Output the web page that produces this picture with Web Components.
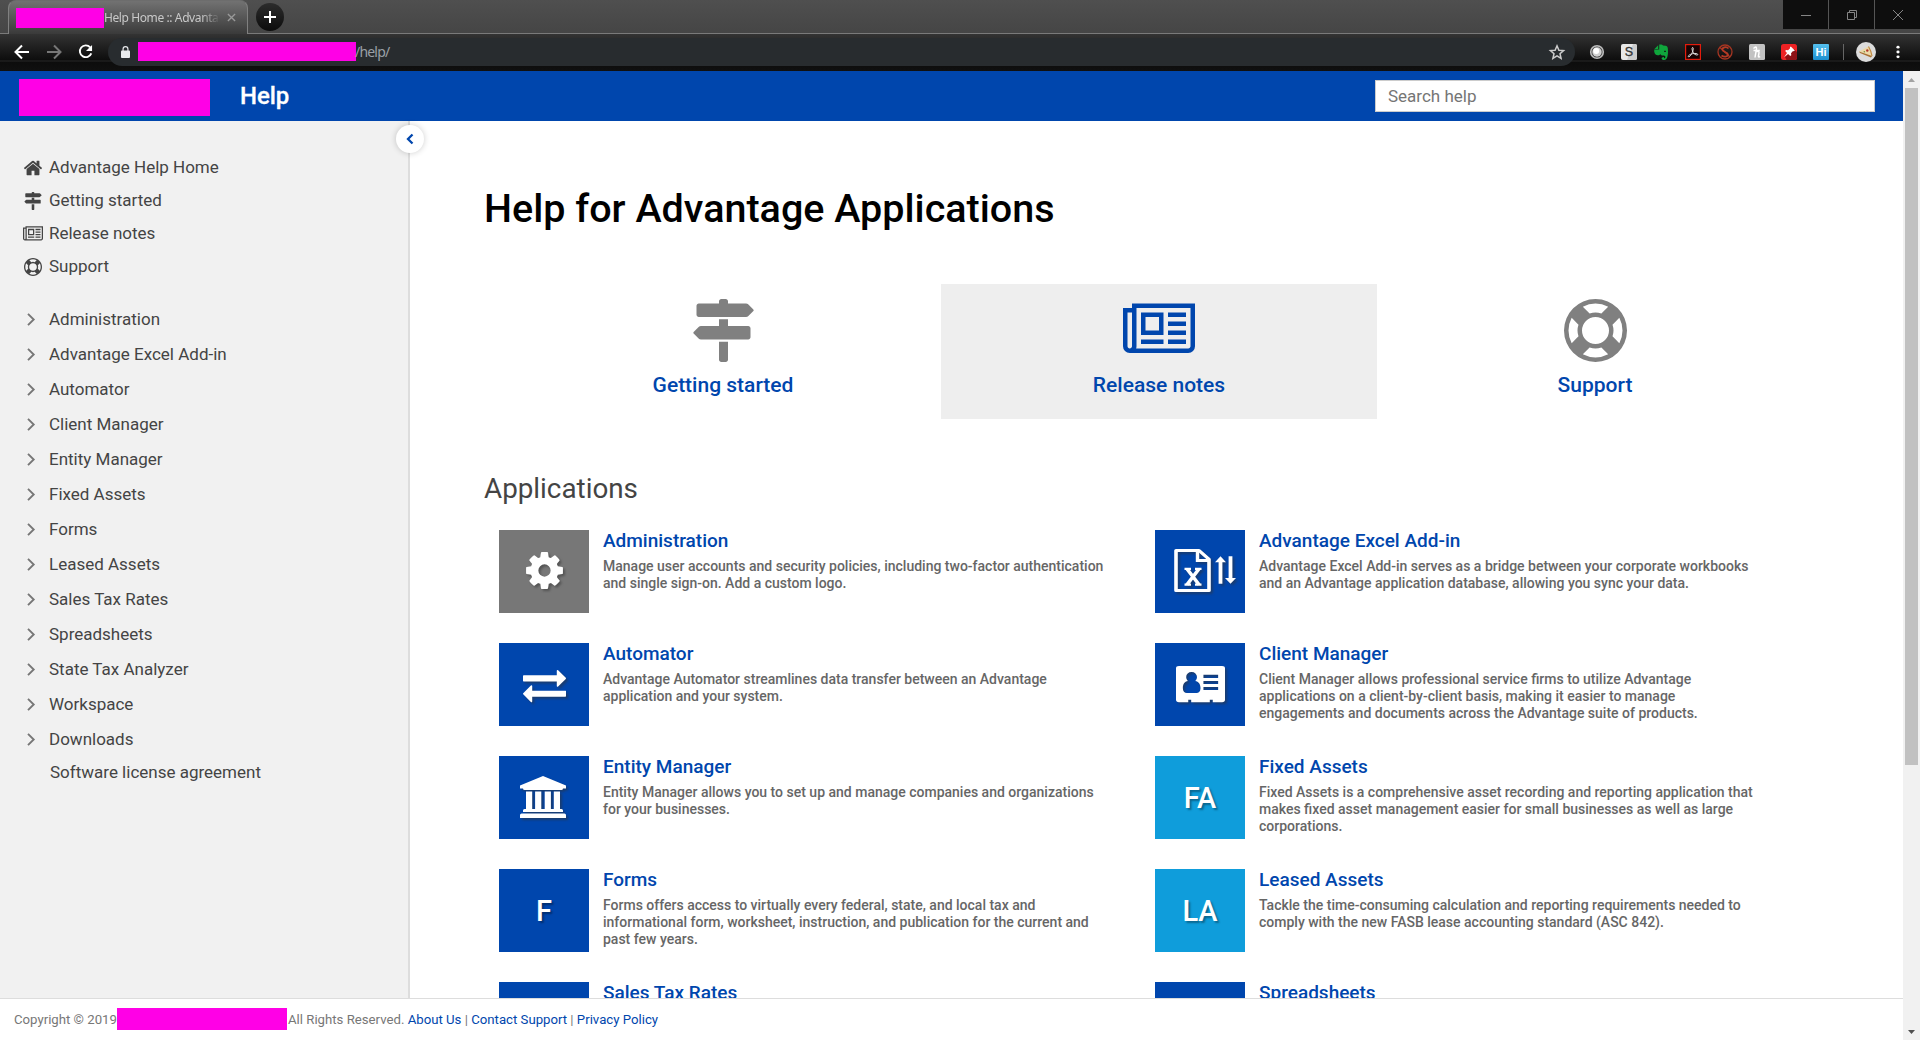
<!DOCTYPE html>
<html lang="en">
<head>
<meta charset="utf-8">
<title>Help Home :: Advantage</title>
<style>
html,body{margin:0;height:100%;overflow:hidden;background:#fff}
body{font:17px/1.2 Roboto,"Liberation Sans",sans-serif;color:#444}
</style>
</head>
<body>
<help-window></help-window>
<script>
const P={
home:['0 0 1792 1792','<path d="M1472 992v480q0 26-19 45t-45 19h-384v-384h-256v384h-384q-26 0-45-19t-19-45v-480q0-1 .5-3t.5-3l575-474 575 474q1 2 1 6zm223-69l-62 74q-8 9-21 11h-3q-13 0-21-7l-692-577-692 577q-12 8-24 7-13-2-21-11l-62-74q-8-10-7-23.5t11-21.5l719-599q32-26 76-26t76 26l244 204v-195q0-14 9-23t23-9h192q14 0 23 9t9 23v408l219 182q10 8 11 21.5t-7 23.5z"/>'],
signs:['0 0 1792 1792','<path d="M1745 297q10 10 10 23t-10 23l-141 141q-28 28-68 28h-1344q-26 0-45-19t-19-45v-256q0-26 19-45t45-19h576v-64q0-26 19-45t45-19h128q26 0 45 19t19 45v64h512q40 0 68 28zm-977 919h256v512q0 26-19 45t-45 19h-128q-26 0-45-19t-19-45v-512zm832-448q26 0 45 19t19 45v256q0 26-19 45t-45 19h-1344q-40 0-68-28l-141-141q-10-10-10-23t10-23l141-141q28-28 68-28h512v-192h256v192h576z"/>'],
news:['0 0 2048 1792','<path d="M1024 512h-384v384h384v-384zm128 640v128h-640v-128h640zm0-768v640h-640v-640h640zm640 768v128h-512v-128h512zm0-256v128h-512v-128h512zm0-256v128h-512v-128h512zm0-256v128h-512v-128h512zm-1536 960v-960h-128v960q0 26 19 45t45 19 45-19 19-45zm1664 0v-1088h-1536v1088q0 33-11 64h1483q26 0 45-19t19-45zm128-1216v1216q0 80-56 136t-136 56h-1664q-80 0-136-56t-56-136v-1088h256v-128h1792z"/>'],
ring:['0 0 1792 1792','<path d="M896 0q182 0 348 71t286 191 191 286 71 348-71 348-191 286-286 191-348 71-348-71-286-191-191-286-71-348 71-348 191-286 286-191 348-71zm0 128q-190 0-361 90l194 194q82-28 167-28t167 28l194-194q-171-90-361-90zm-678 1129l194-194q-28-82-28-167t28-167l-194-194q-90 171-90 361t90 361zm678 407q190 0 361-90l-194-194q-82 28-167 28t-167-28l-194 194q171 90 361 90zm0-384q159 0 271.5-112.5t112.5-271.5-112.5-271.5-271.5-112.5-271.5 112.5-112.5 271.5 112.5 271.5 271.5 112.5zm484-217l194 194q90-171 90-361t-90-361l-194 194q28 82 28 167t-28 167z"/>'],
cog:['0 0 1792 1792','<path d="M1152 896q0-106-75-181t-181-75-181 75-75 181 75 181 181 75 181-75 75-181zm512-109v222q0 12-8 23t-20 13l-185 28q-19 54-39 91 35 50 107 138 10 12 10 25t-9 23q-27 37-99 108t-94 71q-12 0-26-9l-138-108q-44 23-91 38-16 136-29 186-7 28-36 28h-222q-14 0-24.5-8.5t-11.5-21.5l-28-184q-49-16-90-37l-141 107q-10 9-25 9-14 0-25-11-126-114-165-168-7-10-7-23 0-12 8-23 15-21 51-66.5t54-70.5q-27-50-41-99l-183-27q-13-2-21-12.5t-8-23.5v-222q0-12 8-23t19-13l186-28q14-46 39-92-40-57-107-138-10-12-10-24 0-10 9-23 26-36 98.500-107.500t94.500-71.500q13 0 26 10l138 107q44-23 91-38 16-136 29-186 7-28 36-28h222q14 0 24.500 8.500t11.500 21.500l28 184q49 16 90 37l142-107q9-9 24-9 13 0 25 10 129 119 165 170 7 8 7 22 0 12-8 23-15 21-51 66.500t-54 70.500q26 50 41 98l183 28q13 2 21 12.500t8 23.500z"/>'],
exchange:['0 0 1792 1792','<path d="M1792 1184v192q0 13-9.500 22.500t-22.500 9.500h-1376v192q0 13-9.500 22.500t-22.500 9.500q-12 0-24-10l-319-320q-9-9-9-22 0-14 9-23l320-320q9-9 23-9 13 0 22.500 9.500t9.500 22.500v192h1376q13 0 22.500 9.500t9.500 22.500zm0-544q0 14-9 23l-320 320q-9 9-23 9-13 0-22.500-9.500t-9.500-22.500v-192h-1376q-13 0-22.500-9.500t-9.500-22.500v-192q0-13 9.500-22.500t22.500-9.500h1376v-192q0-14 9-23t23-9q12 0 24 10l319 319q9 9 9 23z"/>'],
excel:['0 0 64 54','<path d="M3 3h23l10 10.500v37.500H3z" fill="none" stroke="currentColor" stroke-width="3.600" stroke-linejoin="round"/><path d="M24.500 3v12H36" fill="none" stroke="currentColor" stroke-width="3.400"/><path d="M14 25l12 19M26 25L14 44" fill="none" stroke="currentColor" stroke-width="3.600"/><path d="M11.500 25h6.500M22 25h6.500M11.500 44h6.500M22 44h6.500" stroke="currentColor" stroke-width="2.600"/><path d="M42 17l5.500-7 5.500 7h-3.600v26h-3.800V17zM52 36h3.600V10h3.800v26H63l-5.500 7z"/>'],
idcard:['0 0 50 46','<path fill-rule="evenodd" d="M3 0h44a3 3 0 0 1 3 3v39a3 3 0 0 1-3 3H37.500v-3h-3v3h-19v-3h-3v3H3a3 3 0 0 1-3-3V3a3 3 0 0 1 3-3zM15.800 7.500a5.400 6 0 0 0-5.400 6.200c0 2 .8 3.700 1.800 4.900-3.600.5-5.200 4.200-5.200 9 0 3.500 1.600 6 4.200 6h9.600c2.600 0 4.200-2.500 4.200-6 0-4.800-1.900-8.500-5.400-9 1-1.200 1.800-2.900 1.800-4.900a5.400 6 0 0 0-5.600-6.200zM28 11v3.800h15V11zm0 7.500v3.800h15v-3.800zm0 7.500v3.800h15V26z"/>'],
bank:['0 0 46 42','<path d="M23 0l23 9.500v3h-3q0 1.500-1.700 1.500H4.700Q3 14 3 12.500H0v-3zM6 15.500h6.200V33h2.900V15.500h6.200V33h3.400V15.500h6.200V33h2.900V15.500H40V33h1.500q1.500 0 1.500 1.500V36H3v-1.500Q3 33 4.500 33H6zM1.700 37.500h42.600Q46 37.500 46 39v3H0v-3q0-1.500 1.700-1.500z"/>'],
chev:['0 0 8 13','<path d="M1 .8l5.700 5.700L1 12.200" fill="none" stroke="#777" stroke-width="1.900"/>'],
left:['0 0 8 12','<path d="M6.500 1.500L2 6l4.500 4.500" fill="none" stroke="currentColor" stroke-width="2.300"/>'],
back:['0 0 16 16','<path d="M15 8H2M8 1.500L1.500 8 8 14.500" fill="none" stroke="currentColor" stroke-width="2"/>'],
fwd:['0 0 16 16','<path d="M1 8h13M8 1.500L14.500 8 8 14.500" fill="none" stroke="currentColor" stroke-width="2"/>'],
reload:['0 0 16 16','<path d="M13 3.500A6.300 6.300 0 1 0 14.200 10" fill="none" stroke="currentColor" stroke-width="2"/><path d="M15 1v6.500H8.500z"/>'],
lock:['0 0 10 13','<path d="M1 5h8a1 1 0 0 1 1 1v6a1 1 0 0 1-1 1H1a1 1 0 0 1-1-1V6a1 1 0 0 1 1-1z"/><path d="M2.300 5.500V3.300a2.700 2.700 0 0 1 5.400 0v2.200" fill="none" stroke="currentColor" stroke-width="1.300"/>'],
x:['0 0 10 10','<path d="M1 1l8 8M9 1L1 9" fill="none" stroke="currentColor" stroke-width="1.500"/>'],
plus:['0 0 12 12','<path d="M6 0v12M0 6h12" stroke="currentColor" stroke-width="2"/>'],
star:['0 0 16 16','<path d="M8 1.800l1.900 4.400 4.700.4-3.600 3.100 1.100 4.700L8 11.900l-4.100 2.500L5 9.700 1.400 6.600l4.700-.4z" fill="none" stroke="currentColor" stroke-width="1.500"/>'],
orb:['0 0 16 16','<circle cx="8" cy="8" r="6.300" fill="#444" stroke="#bbb" stroke-width="1.600"/><circle cx="8" cy="8" r="4.700" fill="#d0d0d0"/><circle cx="7.200" cy="7" r="3" fill="#fff"/>'],
sbox:['0 0 16 16','<rect width="16" height="16" rx="2" fill="#e8e8e8"/><path d="M12 0h2a2 2 0 0 1 2 2v12a2 2 0 0 1-2 2H6z" fill="#ccc"/><text x="8" y="12.300" text-anchor="middle" font-family="Liberation Sans" font-size="12.500" fill="#333" stroke="#333" stroke-width=".3">S</text>'],
elephant:['0 0 16 16','<path d="M5.200 1.200L1.500 5h3.700zM6.200.6v4.900H1.200C.9 8.800 2 11 4.500 11.300c1.500.2 2.400-.4 2.700-1.300.6 1 1.500 1.500 3 1.600 1.400 0 2.200.5 2.200 1.500 0 .9-.6 1.200-1.400 1.200v-1.400c-1.800 0-2.600.8-2.400 1.800.2.900 1.400 1.200 2.800 1.200 2.600 0 3.600-3.500 3.600-8.300C15 3.700 14.600 2 12.700 1.800L10 1.500C9.400.6 8 .2 6.200.6z" fill="#0fa63c"/><path d="M11 7.500q1.200-1 2 .2" stroke="#111" fill="none"/>'],
pdf:['0 0 16 16','<rect x=".6" y=".6" width="14.800" height="14.800" fill="#170303" stroke="#e31b0c" stroke-width="1.200"/><path d="M7.500 3.500c1.500 0 .6 3.500-.7 6C5.500 12 4 13.400 3.300 12.700c-.6-.9 1.700-2.500 4.200-3 2.600-.5 5.300-.3 5.300.8 0 1-2.300.6-3.800-.9C7.500 8.200 6.300 3.800 7.500 3.500z" fill="none" stroke="#e5e5e5" stroke-width=".95"/>'],
nos:['0 0 16 16','<circle cx="8" cy="8" r="7" fill="none" stroke="#a53522" stroke-width="1.300"/><path d="M2.800 3.200L13 13" stroke="#a53522" stroke-width="1.300"/><path d="M11.500 4.500C9 2 5 3.500 5.500 6c.5 2 5.500 2 5.500 4.500 0 2.300-4 3-6.500 1" stroke="#b53a25" fill="none" stroke-width="1.700"/>'],
hbox:['0 0 16 16','<rect width="16" height="16" rx="1.500" fill="#c2c2c2"/><path d="M4.500 4.500q3-3 3 0L6 13.500M6.500 8.500q3.500-2.500 3.500 0l-.6 3.800q0 1.200 1.800.3M4.500 6.500h6.300" stroke="#fff" stroke-width="1.500" fill="none"/>'],
pin:['0 0 16 16','<rect width="16" height="16" rx="2.500" fill="#ee2224"/><path d="M13 5l3 3v5.500a2.500 2.500 0 0 1-2.500 2.500H5.500L4 13z" fill="#8e1216"/><path d="M9.800 2.500l4 4-1 .8-.8-.2-2 2.200.3 1.900-1 .9-2.300-2.200L3 13.300 6 9 4.200 6.900l.8-.9 2 .2 2.100-2-.2-.9z" fill="#fff"/>'],
hi:['0 0 16 16','<defs><linearGradient id="g" x2="0" y2="1"><stop stop-color="#55c0ee"/><stop offset="1" stop-color="#1b8fd0"/></linearGradient></defs><rect width="16" height="16" rx="1" fill="url(#g)"/><text x="8" y="12" text-anchor="middle" font-family="Liberation Sans" font-weight="700" font-size="11" fill="#fff">Hi</text>'],
pizza:['0 0 20 20','<circle cx="10" cy="10" r="10" fill="#dcdcdc"/><path d="M3 9.500L12.500 4.500q2.500 4 3.500 9.500z" fill="#ecd9a8"/><path d="M3 9.500l13 4.500-1 1.500L4 11z" fill="#a9702f"/><path d="M12.500 4.500q2.500 4 3.500 9.500" stroke="#c08a45" stroke-width="1.200" fill="none"/><circle cx="11.300" cy="8.500" r="1.200" fill="#b3332a"/><circle cx="8.300" cy="9.700" r=".8" fill="#7a8a3a"/>'],
dots:['0 0 4 16','<circle cx="2" cy="2.500" r="1.600"/><circle cx="2" cy="8" r="1.600"/><circle cx="2" cy="13.500" r="1.600"/>'],
min:['0 0 10 10','<path d="M0 5.500h10" stroke="currentColor"/>'],
max:['0 0 10 10','<path d="M.5 2.500h7v7h-7zM2.500 2.500v-2h7v7h-2" fill="none" stroke="currentColor"/>'],
cls:['0 0 10 10','<path d="M0 0l10 10M10 0L0 10" stroke="currentColor" fill="none"/>'],
up:['0 0 8 4','<path d="M4 0l4 4H0z"/>'],
down:['0 0 8 4','<path d="M0 0h8L4 4z"/>']
};
const define=(name,html)=>customElements.define(name,class extends HTMLElement{
  connectedCallback(){
    if(this.shadowRoot)return;
    this.attachShadow({mode:'open'}).innerHTML=typeof html==='function'?html(this):html;
  }
});
const A=(e,n,d='')=>e.getAttribute(n)??d;

define('ui-icon',e=>{
  const [vb,body]=P[A(e,'name')];
  return `<style>:host{display:block;flex:none;width:${A(e,'w')}px;height:${A(e,'h')}px}svg{display:block;overflow:visible}</style>
  <svg viewBox="${vb}" width="${A(e,'w')}" height="${A(e,'h')}" fill="currentColor" preserveAspectRatio="none">${body}</svg>`});

define('redacted-block',e=>`<style>:host{display:block;flex:none;background:#ff00e6;width:${A(e,'w')}px;height:${A(e,'h')}px}</style>`);

define('tab-strip',`<style>
:host{display:flex;height:34px;background:linear-gradient(#4f4f4f,#454545);align-items:flex-start}
.edge{width:8px;height:33px;flex:none;border-bottom:1px solid #7a7a7a}
.tab{box-sizing:border-box;width:240px;height:34px;border:1px solid #808080;border-bottom:0;border-top-color:#6d6d6d;border-radius:8px 8px 0 0;background:linear-gradient(#727272,#3a3a3a);display:flex;align-items:center;padding:0 10px 0 7px;flex:none;color:#c9c9c9}
.t{font:12px/16px "Noto Sans",sans-serif;letter-spacing:-.4px;width:116px;white-space:nowrap;overflow:hidden;-webkit-mask:linear-gradient(90deg,#000 84%,transparent);mask:linear-gradient(90deg,#000 84%,transparent)}
.tab ui-icon{color:#999;margin-left:7px}
.rest{flex:1;height:33px;border-bottom:1px solid #7a7a7a;display:flex;justify-content:space-between}
.new{width:28px;height:28px;border-radius:50%;background:linear-gradient(#2c2c2c,#0c0c0c);color:#fff;display:grid;place-items:center;margin:3px 0 0 8px}
.win{display:flex;height:29px;gap:1px;background:#555}
.win div{width:45px;background:#0e0e0e;color:#858585;display:grid;place-items:center}
</style><div class="edge"></div><div class="tab"><redacted-block w="88" h="20"></redacted-block><span class="t">Help Home :: Advanta</span><ui-icon name="x" w="9" h="9"></ui-icon></div>
<div class="rest"><div class="new"><ui-icon name="plus" w="12" h="12"></ui-icon></div><div class="win"><div><ui-icon name="min" w="10" h="10"></ui-icon></div><div><ui-icon name="max" w="10" h="10"></ui-icon></div><div><ui-icon name="cls" w="10" h="10"></ui-icon></div></div></div>`);

define('tool-bar',`<style>
:host{display:flex;height:37px;box-sizing:border-box;background:linear-gradient(#333,#0d0d0d 26px,#272727 27px,#0c0c0c 28px,#101010);align-items:flex-start;padding:0 20px 0 14px;color:#fff}
.nav{display:flex;gap:16px;padding-top:10px;flex:none}
.url{margin-left:15px;width:1467px;box-sizing:border-box;height:28px;margin-top:4px;border-radius:14px;background:#282c2f;display:flex;align-items:center;padding:0 10px 0 13px;color:#e8eaed;flex:none}
.url span{font:14px/20px "Noto Sans",sans-serif;letter-spacing:-.8px;color:#9aa0a6;flex:1;margin-left:-1px}
.ext{display:flex;gap:16px;align-items:center;margin:8px 0 0 14px;height:20px}
.sep{width:1px;height:16px;background:#666;margin:0 -2px 0 -2px}
</style><div class="nav"><ui-icon name="back" w="16" h="16"></ui-icon><ui-icon name="fwd" w="16" h="16" style="color:#777"></ui-icon><ui-icon name="reload" w="15" h="15"></ui-icon></div>
<div class="url"><ui-icon name="lock" w="9" h="12"></ui-icon><redacted-block w="218" h="19" style="margin:-2px 0 0 8px"></redacted-block><span>/help/</span><ui-icon name="star" w="16" h="16" style="color:#ccc"></ui-icon></div>
<div class="ext">${['orb','sbox','elephant','pdf','nos','hbox','pin','hi'].map(n=>`<ui-icon name="${n}" w="16" h="16"></ui-icon>`).join('')}<div class="sep"></div><ui-icon name="pizza" w="20" h="20" style="margin-left:-2px"></ui-icon><ui-icon name="dots" w="4" h="14" style="margin-left:4px"></ui-icon></div>`);

define('help-header',`<style>
:host{display:flex;height:50px;background:#0046ad;align-items:center;padding:0 28px 0 19px;box-sizing:border-box}
h2{margin:0 0 0 30px;font:500 24px/28px Roboto,sans-serif;letter-spacing:-.1px;color:#fff;flex:1;-webkit-text-stroke:.3px #fff}
.s{width:500px;height:32px;box-sizing:border-box;border:1px solid #ccc;background:#fff;color:#757575;line-height:31px;padding-left:12px}
</style><redacted-block w="191" h="37" style="margin-top:3px"></redacted-block><h2>Help</h2><div class="s">Search help</div>`);

define('nav-link',e=>`<style>:host{display:flex;height:33px;align-items:center}.i{width:25px;display:grid;place-items:center;flex:none}</style><div class="i"><ui-icon name="${A(e,'icon')}" w="${A(e,'w','18')}" h="${A(e,'h','18')}"></ui-icon></div><slot></slot>`);
define('nav-node',`<style>:host{display:flex;height:35px;align-items:center}ui-icon{margin:0 14px 0 6px}</style><ui-icon name="chev" w="8" h="13"></ui-icon><slot></slot>`);

define('help-sidebar',`<style>
:host{display:block;box-sizing:border-box;width:410px;flex:none;background:#f1f1f1;border-right:2px solid #ddd;padding:30px 0 0 21px;position:relative}
nav{display:flex;flex-direction:column}
nav nav-link{margin:0 0 0 -1px;gap:4px}
.tree{margin-top:19px}
.plain{height:31px;line-height:31px;padding-left:29px}
.tog{position:absolute;right:-16px;top:4px;width:28px;height:28px;border-radius:50%;background:#fff;box-shadow:0 0 6px rgba(0,0,0,.2);display:grid;place-items:center;color:#0046ad;z-index:2}
</style><nav><nav-link icon="home" w="20" h="20">Advantage Help Home</nav-link><nav-link icon="signs">Getting started</nav-link><nav-link icon="news" w="20">Release notes</nav-link><nav-link icon="ring">Support</nav-link></nav>
<nav class="tree">${['Administration','Advantage Excel Add-in','Automator','Client Manager','Entity Manager','Fixed Assets','Forms','Leased Assets','Sales Tax Rates','Spreadsheets','State Tax Analyzer','Workspace','Downloads'].map(t=>`<nav-node>${t}</nav-node>`).join('')}<div class="plain">Software license agreement</div></nav>
<div class="tog"><ui-icon name="left" w="8" h="12"></ui-icon></div>`);

define('quick-link',e=>`<style>:host{display:flex;flex-direction:column;align-items:center;width:436px;height:135px;box-sizing:border-box;padding-top:15px;color:#808080}
:host([active]){background:#eee;color:#0046ad}
span{font:500 21px/24px Roboto,sans-serif;color:#0046ad;margin-top:11px}</style><ui-icon name="${A(e,'icon')}" w="${A(e,'w','63')}" h="63"></ui-icon><span><slot></slot></span>`);

define('app-card',e=>`<style>
:host{display:flex;height:83px;width:656px}
.t{width:90px;height:83px;flex:none;background:${A(e,'bg','#0046ad')};display:grid;place-items:center;color:#fff;font:500 29px/32px Roboto,sans-serif;text-shadow:2px 2px 2px rgba(0,0,0,.35)}
.t ui-icon{filter:drop-shadow(2px 2px 1px rgba(50,50,50,.5))}
.b{margin-left:14px;width:505px}
h3{margin:0 0 6px;font:500 19px/22px Roboto,sans-serif;color:#0046ad}
p{margin:0;font:500 14px/17px Roboto,sans-serif;color:#666;white-space:nowrap}
</style><div class="t">${A(e,'icon')?`<ui-icon name="${A(e,'icon')}" w="${A(e,'w')}" h="${A(e,'h')}" style="${A(e,'nudge')}"></ui-icon>`:A(e,'abbr')}</div><div class="b"><h3>${A(e,'head')}</h3><p><slot></slot></p></div>`);

define('help-main',`<style>
:host{display:block;flex:1;overflow:hidden;background:#fff}
h1{margin:64px 0 0 74px;font:500 39.5px/48px Roboto,sans-serif;color:#000}
.q{display:flex;margin:51px 0 0 95px}
h2{margin:54px 0 0 74px;font:400 27.8px/32px Roboto,sans-serif;color:#444}
.g{display:grid;grid-template-columns:656px 656px;row-gap:30px;margin:25px 0 0 89px}
</style><h1>Help for Advantage Applications</h1>
<div class="q"><quick-link icon="signs">Getting started</quick-link><quick-link icon="news" w="72" active>Release notes</quick-link><quick-link icon="ring">Support</quick-link></div>
<h2>Applications</h2>
<div class="g">
<app-card head="Administration" icon="cog" w="43" h="43" bg="#777" nudge="margin-bottom:2px">Manage user accounts and security policies, including two-factor authentication<br>and single sign-on. Add a custom logo.</app-card>
<app-card head="Advantage Excel Add-in" icon="excel" w="64" h="45" nudge="margin:0 0 2px 9px">Advantage Excel Add-in serves as a bridge between your corporate workbooks<br>and an Advantage application database, allowing you sync your data.</app-card>
<app-card head="Automator" icon="exchange" w="43" h="43" nudge="margin-bottom:1px">Advantage Automator streamlines data transfer between an Advantage<br>application and your system.</app-card>
<app-card head="Client Manager" icon="idcard" w="49" h="37" nudge="margin-bottom:1px">Client Manager allows professional service firms to utilize Advantage<br>applications on a client-by-client basis, making it easier to manage<br>engagements and documents across the Advantage suite of products.</app-card>
<app-card head="Entity Manager" icon="bank" w="46" h="42" nudge="margin:0 2px 2px 0">Entity Manager allows you to set up and manage companies and organizations<br>for your businesses.</app-card>
<app-card head="Fixed Assets" abbr="FA" bg="#0f9ddb">Fixed Assets is a comprehensive asset recording and reporting application that<br>makes fixed asset management easier for small businesses as well as large<br>corporations.</app-card>
<app-card head="Forms" abbr="F">Forms offers access to virtually every federal, state, and local tax and<br>informational form, worksheet, instruction, and publication for the current and<br>past few years.</app-card>
<app-card head="Leased Assets" abbr="LA" bg="#0f9ddb">Tackle the time-consuming calculation and reporting requirements needed to<br>comply with the new FASB lease accounting standard (ASC 842).</app-card>
<app-card head="Sales Tax Rates"></app-card><app-card head="Spreadsheets"></app-card>
</div>`);

define('help-footer',`<style>
:host{display:flex;box-sizing:border-box;height:42px;border-top:1px solid #ddd;background:#fff;align-items:center;padding-left:14px;font-size:13.200px;color:#777;white-space:pre}
a{color:#0046ad}
</style><span style="width:103px">Copyright © 2019</span><redacted-block w="170" h="22" style="margin-bottom:1px"></redacted-block><span style="margin-left:1px">All Rights Reserved. <a>About Us</a> | <a>Contact Support</a> | <a>Privacy Policy</a></span>`);

define('scroll-bar',`<style>
:host{display:flex;flex-direction:column;align-items:center;width:17px;flex:none;background:#f1f1f1}
.u,.d{height:17px;width:17px;display:grid;place-items:center;color:#a3a3a3}
.d{color:#505050}
.th{width:13px;height:677px;background:#c1c1c1}
.sp{flex:1}
</style><div class="u"><ui-icon name="up" w="7" h="4"></ui-icon></div><div class="th"></div><div class="sp"></div><div class="d"><ui-icon name="down" w="7" h="4"></ui-icon></div>`);

define('help-window',`<style>
:host{display:flex;flex-direction:column;width:1920px;height:1040px}
.v{display:flex;flex:1;min-height:0}
.p{flex:1;display:flex;flex-direction:column;min-width:0}
.m{flex:1;display:flex;min-height:0}
</style><tab-strip></tab-strip><tool-bar></tool-bar><div class="v"><div class="p"><help-header></help-header><div class="m"><help-sidebar></help-sidebar><help-main></help-main></div><help-footer></help-footer></div><scroll-bar></scroll-bar></div>`);
</script>
</body>
</html>
